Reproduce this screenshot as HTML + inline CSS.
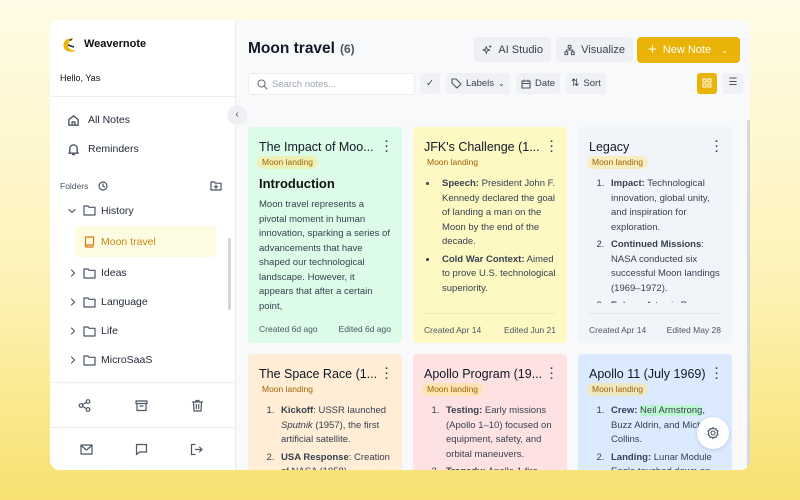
<!DOCTYPE html>
<html><head><meta charset="utf-8"><style>
*{box-sizing:border-box;margin:0;padding:0}
body{width:800px;height:500px;overflow:hidden;font-family:"Liberation Sans",sans-serif;background:linear-gradient(180deg,#fffbe6 0%,#fdf3b8 55%,#f8e170 100%);position:relative;color:#1f2937}
.app{position:absolute;left:50px;top:20px;width:700px;height:450px;border-radius:10px;overflow:hidden;background:#f8f9fb}
.side{position:absolute;left:0;top:0;width:186px;height:450px;background:#fff;border-right:1px solid #e9ebef}
.a{position:absolute;white-space:nowrap}
.ico{stroke:#4b5563;fill:none;stroke-width:1.5;stroke-linecap:round;stroke-linejoin:round}
.card{position:absolute;width:154px;border-radius:4px;padding:12px 11px;font-size:10px;line-height:16px;color:#374151}
.card h3{font-size:12.5px;font-weight:normal;color:#111827;line-height:16px}
.tag{display:inline-block;background:#fde68a88;color:#a16207;font-size:8.5px;border-radius:8px;padding:0 5px;line-height:13px;margin-left:-2px}
.dots{position:absolute;right:14px;top:13px;font-size:11px;font-weight:bold;color:#374151;line-height:5px;width:3px;text-align:center}
.foot{position:absolute;left:11px;right:11px;top:186px;border-top:1px solid #0000000f;padding-top:8px;font-size:8.5px;color:#4b5563;display:flex;justify-content:space-between}
ol,ul{padding-left:18px}
ul{padding-left:14px}
li{padding-left:4px;margin-bottom:1px}
.btn{position:absolute;height:25px;border-radius:4px;background:#eef0f3;font-size:11.5px;color:#374151;display:flex;align-items:center;gap:6px;padding:0 9px;white-space:nowrap}
.fb{position:absolute;height:21px;border-radius:3px;background:#eff1f4;font-size:9.5px;color:#374151;display:flex;align-items:center;gap:4px;padding:0 5px;white-space:nowrap}
</style></head><body>
<div class="app">
<div class="side">
  <svg class="a" style="left:10px;top:16px" width="18" height="18" viewBox="0 0 18 18"><path d="M13 3 C7 1 2 6 4 12 C6 16 12 17 16 14 C11 15 7 12 8 8 C9 5 11 4 13 3Z" fill="#eab308"/><path d="M9 4 L13 2 L11 5Z" fill="#1f2937"/><path d="M8 9 L14 11" stroke="#1f2937" stroke-width="1.5"/></svg>
  <div class="a" style="left:34px;top:18px;font-size:11px;font-weight:bold;color:#111">Weavernote</div>
  <div class="a" style="left:10px;top:53px;font-size:9px;color:#111">Hello, Yas</div>
  <div class="a" style="left:0;top:76px;width:186px;border-top:1px solid #eceef1"></div>
  <svg class="a ico" style="left:17px;top:94px" width="13" height="13" viewBox="0 0 14 14"><path d="M2 6 L7 2 L12 6 V12 H2Z M5.5 12 V8.5 H8.5 V12"/></svg>
  <div class="a" style="left:38px;top:94px;font-size:10.5px">All Notes</div>
  <svg class="a ico" style="left:17px;top:123px" width="13" height="13" viewBox="0 0 14 14"><path d="M3 10 V6 a4 4 0 0 1 8 0 V10 L12 11 H2Z M6 12.5 h2"/></svg>
  <div class="a" style="left:38px;top:123px;font-size:10.5px">Reminders</div>
  <div class="a" style="left:10px;top:161px;font-size:8.5px;color:#4b5563">Folders</div>
  <svg class="a ico" style="left:48px;top:161px;stroke-width:1.2" width="10" height="10" viewBox="0 0 10 10"><circle cx="5" cy="5" r="4"/><path d="M5 3 V5 L6.5 6"/></svg>
  <svg class="a ico" style="left:160px;top:160px;stroke-width:1.2" width="12" height="11" viewBox="0 0 12 11"><path d="M1 2 H4.5 L5.5 3.2 H11 V10 H1Z M6 5 V8.5 M4.3 6.7 H7.7"/></svg>
  <svg class="a ico" style="left:18px;top:187px;stroke-width:1.1" width="8" height="8" viewBox="0 0 8 8"><path d="M1 2.5 L4 5.5 L7 2.5"/></svg>
  <svg class="a ico" style="left:33px;top:184px;stroke-width:1.2" width="13" height="12" viewBox="0 0 13 12"><path d="M1 2 H5 L6 3.3 H12 V11 H1Z"/></svg>
  <div class="a" style="left:51px;top:185px;font-size:10.5px">History</div>
  <div class="a" style="left:25px;top:206px;width:141px;height:31px;background:#fefbe3;border-radius:3px"></div>
  <svg class="a" style="left:34px;top:216px" width="11" height="12" viewBox="0 0 11 12"><path d="M1.5 1 H9.5 V9 H2.5 a1 1 0 0 0 0 2 H9.5 M1.5 1 V10" stroke="#d97706" fill="none" stroke-width="1.2"/></svg>
  <div class="a" style="left:51px;top:216px;font-size:10.5px;color:#c08a14">Moon travel</div>
  <div class="a" style="left:178px;top:218px;width:3px;height:72px;background:#d4d6da;border-radius:2px"></div>
  <svg class="a ico" style="left:19px;top:249px;stroke-width:1.1" width="8" height="8" viewBox="0 0 8 8"><path d="M2.5 1 L5.5 4 L2.5 7"/></svg>
  <svg class="a ico" style="left:33px;top:247px;stroke-width:1.2" width="13" height="12" viewBox="0 0 13 12"><path d="M1 2 H5 L6 3.3 H12 V11 H1Z"/></svg>
  <div class="a" style="left:51px;top:247px;font-size:10.5px">Ideas</div>
  <svg class="a ico" style="left:19px;top:278px;stroke-width:1.1" width="8" height="8" viewBox="0 0 8 8"><path d="M2.5 1 L5.5 4 L2.5 7"/></svg>
  <svg class="a ico" style="left:33px;top:276px;stroke-width:1.2" width="13" height="12" viewBox="0 0 13 12"><path d="M1 2 H5 L6 3.3 H12 V11 H1Z"/></svg>
  <div class="a" style="left:51px;top:276px;font-size:10.5px">Language</div>
  <svg class="a ico" style="left:19px;top:307px;stroke-width:1.1" width="8" height="8" viewBox="0 0 8 8"><path d="M2.5 1 L5.5 4 L2.5 7"/></svg>
  <svg class="a ico" style="left:33px;top:305px;stroke-width:1.2" width="13" height="12" viewBox="0 0 13 12"><path d="M1 2 H5 L6 3.3 H12 V11 H1Z"/></svg>
  <div class="a" style="left:51px;top:305px;font-size:10.5px">Life</div>
  <svg class="a ico" style="left:19px;top:336px;stroke-width:1.1" width="8" height="8" viewBox="0 0 8 8"><path d="M2.5 1 L5.5 4 L2.5 7"/></svg>
  <svg class="a ico" style="left:33px;top:334px;stroke-width:1.2" width="13" height="12" viewBox="0 0 13 12"><path d="M1 2 H5 L6 3.3 H12 V11 H1Z"/></svg>
  <div class="a" style="left:51px;top:334px;font-size:10.5px">MicroSaaS</div>
  <div class="a" style="left:0;top:362px;width:186px;border-top:1px solid #eceef1"></div>
  <svg class="a ico" style="left:28px;top:379px;stroke-width:1.2" width="13" height="13" viewBox="0 0 13 13"><circle cx="3" cy="6.5" r="1.8"/><circle cx="10" cy="2.5" r="1.8"/><circle cx="10" cy="10.5" r="1.8"/><path d="M4.6 5.6 L8.4 3.4 M4.6 7.4 L8.4 9.6"/></svg>
  <svg class="a ico" style="left:85px;top:379px;stroke-width:1.2" width="13" height="13" viewBox="0 0 13 13"><path d="M1 2 H12 V4.5 H1Z M2 4.5 V11.5 H11 V4.5 M5 7 H8"/></svg>
  <svg class="a ico" style="left:141px;top:379px;stroke-width:1.2" width="13" height="13" viewBox="0 0 13 13"><path d="M1.5 3 H11.5 M5 3 V1.5 H8 V3 M2.5 3 L3 12 H10 L10.5 3 M5.3 5.5 V9.5 M7.7 5.5 V9.5"/></svg>
  <div class="a" style="left:0;top:407px;width:186px;border-top:1px solid #eceef1"></div>
  <svg class="a ico" style="left:30px;top:424px;stroke-width:1.2" width="13" height="11" viewBox="0 0 13 11"><path d="M1 1 H12 V10 H1Z M1 1.5 L6.5 6 L12 1.5"/></svg>
  <svg class="a ico" style="left:85px;top:423px;stroke-width:1.2" width="13" height="13" viewBox="0 0 13 13"><path d="M1.5 1.5 H11.5 V9 H4.5 L1.5 11.5Z"/></svg>
  <svg class="a ico" style="left:140px;top:423px;stroke-width:1.2" width="13" height="13" viewBox="0 0 13 13"><path d="M5 1.5 H1.5 V11.5 H5 M5.5 6.5 H12 M9.5 4 L12 6.5 L9.5 9"/></svg>
</div>
<div class="a" style="left:177px;top:85px;width:20px;height:20px;border-radius:50%;background:#eef0f3;font-size:10px;color:#555;text-align:center;line-height:19px">‹</div>

<div class="a" style="left:198px;top:20px;font-size:15.5px;font-weight:bold;color:#111827">Moon travel</div>
<div class="a" style="left:290px;top:22px;font-size:12px;font-weight:bold;color:#4b5563">(6)</div>
<div class="btn" style="left:424px;top:17px;width:77px;font-size:11px;padding:0 8px"><svg class="ico" width="12" height="12" viewBox="0 0 12 12" style="stroke-width:1.1"><path d="M5 2 L6 5 L9 6 L6 7 L5 10 L4 7 L1 6 L4 5Z M9.5 1 V3 M8.5 2 H10.5"/></svg>AI Studio</div>
<div class="btn" style="left:506px;top:17px;width:77px;font-size:11px;padding:0 8px"><svg class="ico" width="12" height="12" viewBox="0 0 12 12" style="stroke-width:1.1"><rect x="4.5" y="1" width="3" height="3"/><rect x="1" y="8" width="3" height="3"/><rect x="8" y="8" width="3" height="3"/><path d="M6 4 V6 M2.5 8 V6 H9.5 V8"/></svg>Visualize</div>
<div class="btn" style="left:587px;top:17px;width:103px;height:26px;background:#eab308;color:#fff;padding-left:11px;gap:6px;font-size:11px"><span style="font-size:15px;line-height:10px">+</span>New Note<span style="font-size:8px;margin-left:4px">⌄</span></div>

<div class="a" style="left:198px;top:53px;width:167px;height:22px;background:#fff;border:1px solid #eceef1;border-radius:3px"></div>
<svg class="a ico" style="left:207px;top:59px;stroke:#6b7280;stroke-width:1.1" width="11" height="11" viewBox="0 0 11 11"><circle cx="4.5" cy="4.5" r="3.5"/><path d="M7 7 L10 10"/></svg>
<div class="a" style="left:222px;top:59px;font-size:9.5px;color:#9ca3af">Search notes...</div>
<div class="fb" style="left:370px;top:53px;width:20px;justify-content:center">✓</div>
<div class="fb" style="left:396px;top:53px"><svg class="ico" width="11" height="11" viewBox="0 0 11 11" style="stroke-width:1.1"><path d="M1 1 H5 L10 6 L6 10 L1 5Z"/></svg>Labels <span style="font-size:8px">⌄</span></div>
<div class="fb" style="left:466px;top:53px"><svg class="ico" width="10" height="10" viewBox="0 0 10 10" style="stroke-width:1.1"><rect x="1" y="2" width="8" height="7"/><path d="M1 4.5 H9 M3 1 V2.5 M7 1 V2.5"/></svg>Date</div>
<div class="fb" style="left:516px;top:53px"><span style="font-size:10px">⇅</span>Sort</div>
<div class="a" style="left:647px;top:53px;width:20px;height:21px;background:#eab308;border-radius:3px"></div>
<svg class="a" style="left:652px;top:58px" width="10" height="10" viewBox="0 0 10 10" fill="none" stroke="#fff" stroke-width="1"><rect x="1" y="1" width="3" height="3"/><rect x="6" y="1" width="3" height="3"/><rect x="1" y="6" width="3" height="3"/><rect x="6" y="6" width="3" height="3"/></svg>
<div class="a" style="left:673px;top:53px;width:20px;height:21px;background:#eff1f4;border-radius:3px;font-size:10px;text-align:center;line-height:20px;color:#555">☰</div>
<div class="a" style="left:697px;top:100px;width:3px;height:350px;background:#d6d8dc;border-radius:2px"></div>

<div class="card" style="left:198px;top:107px;height:216px;background:#dcfce7">
<h3>The Impact of Moo...</h3><div class="dots">·<br>·<br>·</div><span class="tag">Moon landing</span>
<div style="font-size:13px;font-weight:bold;color:#111;margin:5px 0 6px">Introduction</div>
<div style="line-height:14.5px;font-size:9.5px">Moon travel represents a pivotal moment in human innovation, sparking a series of advancements that have shaped our technological landscape. However, it appears that after a certain point,</div>
<div class="foot" style="border:0"><span>Created 6d ago</span><span>Edited 6d ago</span></div></div>

<div class="card" style="left:363px;top:107px;height:216px;background:#fef9c3">
<h3>JFK's Challenge (1...</h3><div class="dots">·<br>·<br>·</div><span class="tag" style="background:none">Moon landing</span>
<ul style="margin-top:6px;line-height:14.5px;font-size:9.5px"><li style="margin-bottom:3px"><b>Speech:</b> President John F. Kennedy declared the goal of landing a man on the Moon by the end of the decade.</li><li><b>Cold War Context:</b> Aimed to prove U.S. technological superiority.</li></ul>
<div class="foot"><span>Created Apr 14</span><span>Edited Jun 21</span></div></div>

<div class="card" style="left:528px;top:107px;height:216px;background:#f1f5f9">
<h3>Legacy</h3><div class="dots">·<br>·<br>·</div><span class="tag">Moon landing</span>
<ol style="margin-top:6px;line-height:14.5px;font-size:9.5px;height:126px;overflow:hidden"><li style="margin-bottom:3px"><b>Impact:</b> Technological innovation, global unity, and inspiration for exploration.</li><li style="margin-bottom:3px"><b>Continued Missions</b>: NASA conducted six successful Moon landings (1969–1972).</li><li><b>Future:</b> Artemis Program</li></ol>
<div class="foot"><span>Created Apr 14</span><span>Edited May 28</span></div></div>

<div class="card" style="left:198px;top:334px;height:130px;background:#ffedd5">
<h3>The Space Race (1...</h3><div class="dots">·<br>·<br>·</div><span class="tag" style="background:none">Moon landing</span>
<ol style="margin-top:6px;line-height:14.5px;font-size:9.5px"><li style="margin-bottom:3px"><b>Kickoff</b>: USSR launched <i>Sputnik</i> (1957), the first artificial satellite.</li><li><b>USA Response</b>: Creation of NASA (1958).</li></ol></div>

<div class="card" style="left:363px;top:334px;height:130px;background:#fee2e2">
<h3>Apollo Program (19...</h3><div class="dots">·<br>·<br>·</div><span class="tag">Moon landing</span>
<ol style="margin-top:6px;line-height:14.5px;font-size:9.5px"><li style="margin-bottom:3px"><b>Testing:</b> Early missions (Apollo 1–10) focused on equipment, safety, and orbital maneuvers.</li><li><b>Tragedy:</b> Apollo 1 fire</li></ol></div>

<div class="card" style="left:528px;top:334px;height:130px;background:#dbeafe">
<h3>Apollo 11 (July 1969)</h3><div class="dots">·<br>·<br>·</div><span class="tag">Moon landing</span>
<ol style="margin-top:6px;line-height:14.5px;font-size:9.5px"><li style="margin-bottom:3px"><b>Crew:</b> <span style="background:#bbf7d0">Neil Armstrong</span>, Buzz Aldrin, and Michael Collins.</li><li><b>Landing:</b> Lunar Module Eagle touched down on</li></ol></div>

<div class="a" style="left:647px;top:397px;width:32px;height:32px;border-radius:50%;background:#fff;box-shadow:0 1px 4px #0002"></div>
<svg class="a ico" style="left:656px;top:406px;stroke-width:1.1" width="14" height="14" viewBox="0 0 14 14"><circle cx="7" cy="7" r="2"/><path d="M7 1.5 L8.2 3 L10 2.5 L10.3 4.3 L12 5 L11.2 7 L12 9 L10.3 9.7 L10 11.5 L8.2 11 L7 12.5 L5.8 11 L4 11.5 L3.7 9.7 L2 9 L2.8 7 L2 5 L3.7 4.3 L4 2.5 L5.8 3Z"/></svg>
</div>
</body></html>
